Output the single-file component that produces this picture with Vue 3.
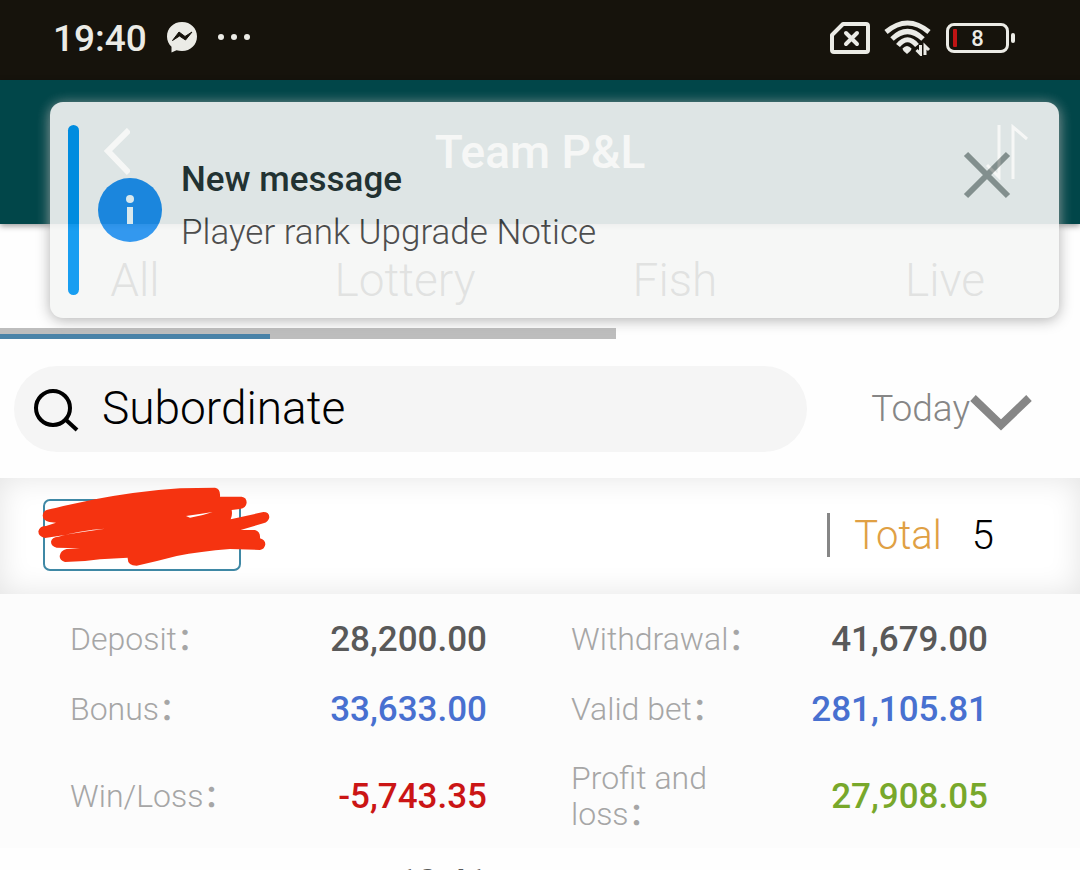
<script setup>
import { ref } from 'vue'

const tabs = ['All', 'Lottery', 'Fish', 'Live']
const activeTab = ref('All')
const keyword = ref('Subordinate')
const showNotice = ref(true)

const stats = [
  { label: 'Deposit', value: '28,200.00', tone: 'plain' },
  { label: 'Withdrawal', value: '41,679.00', tone: 'plain' },
  { label: 'Bonus', value: '33,633.00', tone: 'blue' },
  { label: 'Valid bet', value: '281,105.81', tone: 'blue' },
  { label: 'Win/Loss', value: '-5,743.35', tone: 'red' },
  { label: 'Profit and loss', value: '27,908.05', tone: 'green' },
]
</script>

<template>
  <div class="screen">
    <div class="status">
      <div class="status-side">
        <span class="clock">19:40</span>
        <svg class="messenger" width="32" height="32" viewBox="0 0 32 32">
          <path d="M16 0C7.300 0 1 6.200 1 14.500c0 4.300 1.800 7.700 4.500 10.300V30.500l5-2.300c1.700.5 3.600.8 5.500.8 8.700 0 15-6.200 15-14.500S24.700 0 16 0z" fill="#ebebe6" />
          <path d="M6.500 18.500l6.500-8.500 6 4.500 7-4.500-6.500 8-6-4z" fill="#16130c" stroke="#16130c" stroke-width="1" stroke-linejoin="round" />
        </svg>
        <svg width="34" height="10" viewBox="0 0 34 10" fill="#ebebe6">
          <circle cx="4" cy="4" r="3" /><circle cx="17" cy="4" r="3" /><circle cx="30" cy="4" r="3" />
        </svg>
      </div>
      <div class="status-side icons">
        <svg width="40" height="32" viewBox="0 0 40 32" fill="none" stroke="#ebebe6">
          <path d="M13 2h23q2 0 2 2v24q0 2-2 2H4q-2 0-2-2V13z" stroke-width="4" stroke-linejoin="round" />
          <path d="M16 11l11 11M27 11L16 22" stroke-width="4" stroke-linecap="round" />
        </svg>
        <svg width="48" height="36" viewBox="0 0 48 36" fill="none" stroke="#ebebe6" stroke-width="5">
          <path d="M2 12Q23.500-6 45 12" />
          <path d="M8 19Q23.500 4 39 19" />
          <path d="M14 25.500Q23.500 14 33 25.500" />
          <path d="M18.500 28.500q4.500-5 9 0q0 2-4.500 5.500q-4.500-3.500-4.500-5.500z" fill="#ebebe6" stroke="none" />
          <path d="M36.500 25v9l-4-4M41 35v-9l4 4" stroke-width="3" />
        </svg>
        <div class="battery"><span class="cell"><i class="charge"></i>8</span><i class="tip"></i></div>
      </div>
    </div>

    <header class="header">
      <button class="back" aria-label="Back">
        <svg width="28" height="48" viewBox="0 0 28 48" fill="none" stroke="#fff" stroke-width="6"><path d="M27 2L6 23l21 22" /></svg>
      </button>
      <h1>Team P&amp;L</h1>
      <button class="sort" aria-label="Sort">
        <svg width="42" height="56" viewBox="0 0 42 56" fill="none" stroke="#fff" stroke-width="3">
          <path d="M13 1v52L1 41" /><path d="M27 55V3l14 12" />
        </svg>
      </button>
    </header>

    <nav class="tabs">
      <button v-for="t in tabs" :key="t" :class="{ active: t === activeTab }" @click="activeTab = t">{{ t }}</button>
      <i class="scrollbar"></i>
    </nav>

    <div class="filters">
      <label class="search">
        <svg width="48" height="48" viewBox="0 0 48 48" fill="none" stroke="#000" stroke-width="4">
          <circle cx="21" cy="23" r="17" /><path d="M33 34l12 11" />
        </svg>
        <input v-model="keyword" type="text" aria-label="Search member" />
      </label>
      <button class="period">
        Today
        <svg width="62" height="44" viewBox="0 0 62 44" fill="none" stroke="#868686" stroke-width="8"><path d="M3 11l28 27L59 11" /></svg>
      </button>
    </div>

    <section class="member">
      <div class="name">
        <svg class="scribble" width="234" height="82" viewBox="48 18 702 246">
          <path fill="#f53310" d="M88 88Q110 84 130 78L225 58Q350 34 480 25L585 23Q602 26 600 50L665 50Q680 52 680 68Q678 84 660 87L635 90Q638 105 632 118L730 96Q748 96 748 112Q746 126 730 130L662 150L705 150Q722 155 720 175Q736 180 736 193Q734 208 720 210L630 207Q540 214 470 228Q410 244 350 257Q322 257 323 233L240 238Q190 246 135 246Q119 242 119 228Q121 211 140 207L180 205L110 203Q93 198 93 185Q95 172 115 170L135 165L75 174Q55 170 55 154Q59 138 78 138L108 128L88 126Q68 122 68 106Q70 90 88 88z" />
          <path fill="#fff" d="M135 164Q190 155 255 146Q220 148 180 155zM498 108Q540 102 578 96Q545 108 510 113z" />
        </svg>
      </div>
      <div class="total"><span>Total</span><b>5</b></div>
    </section>

    <dl class="stats">
      <div v-for="s in stats" :key="s.label" class="stat">
        <dt>{{ s.label }}<span>：</span></dt>
        <dd :class="s.tone">{{ s.value }}</dd>
      </div>
    </dl>
    <dl class="stats next">
      <div class="stat"><dt></dt><dd class="plain">10.41</dd></div>
    </dl>

    <aside v-if="showNotice" class="notice" role="status">
      <i class="stripe"></i>
      <svg class="info" width="64" height="64" viewBox="0 0 64 64">
        <circle cx="32" cy="32" r="32" fill="#1e8eee" />
        <circle cx="32" cy="21" r="4" fill="#f0faff" /><path d="M29 29h6v17h-6z" fill="#f0faff" />
      </svg>
      <div class="notice-text">
        <strong>New message</strong>
        <p>Player rank Upgrade Notice</p>
      </div>
      <button class="close" aria-label="Close" @click="showNotice = false">
        <svg width="48" height="48" viewBox="0 0 48 48" fill="none" stroke="#919896" stroke-width="6"><path d="M3 3l42 42M45 3L3 45" /></svg>
      </button>
    </aside>
  </div>
</template>

<style>
body { margin: 0; background: #fff; }
</style>

<style scoped>
* { box-sizing: border-box; }
.screen {
  position: relative;
  height: 100vh;
  overflow: hidden;
  font-family: Roboto, "Noto Sans CJK SC", sans-serif;
  font-weight: 300;
  background: #fefefe;
}
svg { display: block; flex: none; }
button { border: 0; padding: 0; background: none; font: inherit; cursor: pointer; }
h1, p, dl, dd { margin: 0; }

.status {
  height: 80px;
  padding: 0 65px 4px 53px;
  display: flex;
  align-items: center;
  justify-content: space-between;
  background: #16130c;
  color: #ebebe6;
}
.status-side { display: flex; align-items: center; gap: 19px; }
.icons { gap: 14px; }
.clock { font-size: 37px; font-weight: 500; }
.battery { display: flex; align-items: center; gap: 2px; }
.cell {
  position: relative;
  width: 63px;
  height: 30px;
  border: 3px solid #ebebe6;
  border-radius: 8px;
  font-size: 22px;
  font-weight: 500;
  line-height: 26px;
  text-align: center;
}
.charge { position: absolute; left: 4px; top: 3px; bottom: 3px; width: 4px; background: #c01414; border-radius: 1px; }
.tip { width: 4px; height: 10px; border-radius: 2px; background: #ebebe6; }

.header {
  position: relative;
  height: 144px;
  padding: 0 52px;
  display: grid;
  grid-template-columns: 1fr auto 1fr;
  align-items: center;
  background: #014649;
  color: #fff;
  box-shadow: 0 2px 6px rgba(0, 0, 0, 0.4);
}
.header h1 { font-size: 46px; font-weight: 500; }
.back { justify-self: start; margin-left: 50px; }
.sort { justify-self: end; }

.tabs {
  position: relative;
  height: 115px;
  display: grid;
  grid-template-columns: repeat(4, 1fr);
  font-size: 46px;
}
.tabs button { position: relative; z-index: 1; padding-top: 2px; border-bottom: 5px solid transparent; color: #222; }
.tabs .active { border-color: #4a83a8; }
.scrollbar { position: absolute; left: 0; bottom: 0; width: 57%; height: 11px; background: #bdbdbd; }

.filters { height: 139px; padding: 0 48px 0 14px; display: flex; align-items: center; gap: 64px; }
.search {
  flex: 1;
  min-width: 0;
  height: 86px;
  padding: 0 18px;
  display: flex;
  align-items: center;
  gap: 22px;
  border-radius: 43px;
  background: #f5f5f5;
}
.search input { flex: 1; min-width: 0; padding: 0 0 2px; border: 0; outline: 0; background: none; font: inherit; font-size: 46px; color: #000; }
.period { display: flex; align-items: center; font-size: 37px; color: #868686; }

.member {
  height: 116px;
  padding: 0 86px 2px 43px;
  display: flex;
  align-items: center;
  justify-content: space-between;
  background: #fff;
  box-shadow: inset 0 0 30px rgba(0, 0, 0, 0.11);
}
.name { position: relative; width: 198px; height: 72px; border: 2px solid #3f88a5; border-radius: 7px; }
.scribble { position: absolute; left: -9px; top: -15px; }
.total { display: flex; align-items: center; gap: 30px; height: 44px; padding-left: 24px; border-left: 3px solid #868686; font-size: 40px; color: #e0a044; }
.total b { font-weight: 300; color: #000; }

.stats {
  padding: 10px 92px 0 70px;
  display: grid;
  grid-template-columns: 1fr 1fr;
  grid-template-rows: 70px 70px 104px;
  column-gap: 84px;
  background: #fcfcfc;
}
.stat { display: flex; align-items: center; justify-content: space-between; }
dt { max-width: 180px; font-size: 32px; line-height: 36px; color: #a6a6a6; }
dt span { font-weight: 500; }
dd { font-size: 35px; font-weight: 500; }
.plain { color: #595959; }
.blue { color: #4870d0; }
.red { color: #cb1515; }
.green { color: #78a82b; }
.next { padding-top: 0; grid-template-rows: 68px; background: none; }

.notice {
  position: absolute;
  z-index: 2;
  left: 50px;
  right: 21px;
  top: 102px;
  min-height: 216px;
  padding: 23px 48px 23px 18px;
  display: flex;
  align-items: center;
  border-radius: 13px;
  background: #f6f7f6;
  box-shadow: 0 2px 14px #aaa;
  opacity: 0.9;
}
.stripe { align-self: stretch; width: 11px; border-radius: 6px; background: #0094f0; }
.info { margin: 0 19px; }
.notice-text { flex: 1; padding-bottom: 8px; font-size: 35px; line-height: 53px; color: #3c3c3c; }
.notice-text strong { display: block; font-weight: 500; color: #263030; }
.close { align-self: flex-start; margin-top: 26px; }
</style>
